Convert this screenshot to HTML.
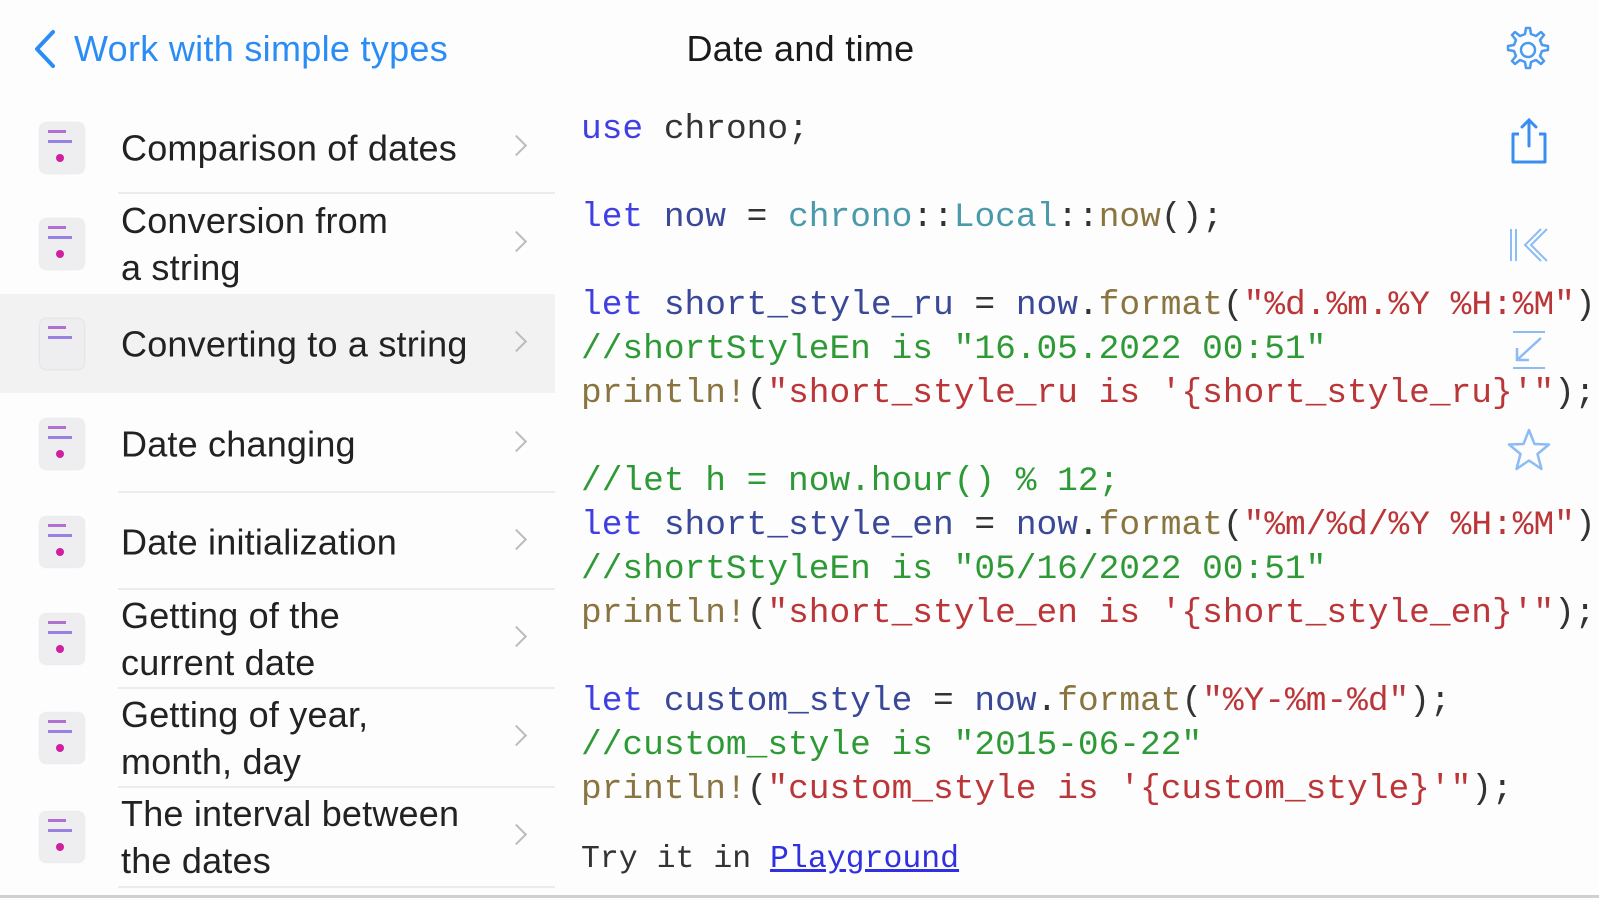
<!DOCTYPE html>
<html><head><meta charset="utf-8"><style>
body{margin:0;width:1599px;height:900px;background:#fdfdfd;position:relative;overflow:hidden;font-family:"Liberation Sans",sans-serif}
.back{position:absolute;left:74px;top:28px;font-size:36px;color:#2a8cf5;letter-spacing:0.3px}
.title{position:absolute;left:0;width:1601px;text-align:center;top:28px;font-size:36px;color:#1a1a1a;letter-spacing:0.3px}
.row{position:absolute;left:0;width:555px;height:96px}
.row.sel{background:#f2f2f2}
.row .t{position:absolute;left:121px;font-size:36px;color:#222;line-height:47px;top:50%;transform:translateY(-50%);letter-spacing:0.2px;white-space:nowrap}
.row .ic{position:absolute;left:40px;top:50%;margin-top:-25px;width:44px;height:50px;border-radius:6px;background:#eeeef0;box-shadow:0 0 2px #ccc}
.row .ic i{position:absolute;left:8px;height:3px;background:#b070d0}
.row .ic b{position:absolute;left:16px;top:31px;width:8px;height:8px;border-radius:50%;background:#d020a0}
.row .ch{position:absolute;left:509px;top:50%;margin-top:-10px;width:13px;height:13px;border-right:2px solid #bbb;border-top:2px solid #bbb;transform:rotate(45deg)}
.sep{position:absolute;left:118px;width:437px;height:2px;background:#ececec}
pre{position:absolute;left:581px;top:108px;margin:0;font-family:"Liberation Mono",monospace;font-size:34.5px;line-height:44px;color:#333}
.k{color:#3f3fe4}.v{color:#3a4898}.t2{color:#4a9aaa}.f{color:#8a7440}.s{color:#bb3638}.c{color:#2e9a36}
.try{position:absolute;left:581px;top:842px;font-family:"Liberation Mono",monospace;font-size:31.5px;color:#333}
.try a{color:#3030e0;text-decoration:underline}
.bot{position:absolute;left:0;top:895px;width:1599px;height:3px;background:#d0d0d0}
svg.i{position:absolute}
</style></head><body>
<svg class="i" style="left:29px;top:28px" width="30" height="42"><path d="M24 4 L8 21 L24 38" fill="none" stroke="#2a8cf5" stroke-width="4" stroke-linecap="round" stroke-linejoin="round"/></svg>
<div class="back">Work with simple types</div>
<div class="title">Date and time</div>

<div class="row" style="top:100px"><div class="ic"><i style="top:7px;width:18px"></i><i style="top:17px;width:24px;background:#9a80e0"></i><b></b></div><div class="t">Comparison of dates</div><div class="ch"></div></div>
<div class="sep" style="top:192px"></div>
<div class="row" style="top:196px"><div class="ic"><i style="top:7px;width:18px"></i><i style="top:17px;width:24px;background:#9a80e0"></i><b></b></div><div class="t">Conversion from<br>a string</div><div class="ch"></div></div>
<div class="row sel" style="top:294px;height:99px"><div class="ic"><i style="top:7px;width:18px"></i><i style="top:17px;width:24px;background:#9a80e0"></i></div><div class="t">Converting to a string</div><div class="ch"></div></div>
<div class="row" style="top:396px"><div class="ic"><i style="top:7px;width:18px"></i><i style="top:17px;width:24px;background:#9a80e0"></i><b></b></div><div class="t">Date changing</div><div class="ch"></div></div>
<div class="sep" style="top:491px"></div>
<div class="row" style="top:494px"><div class="ic"><i style="top:7px;width:18px"></i><i style="top:17px;width:24px;background:#9a80e0"></i><b></b></div><div class="t">Date initialization</div><div class="ch"></div></div>
<div class="sep" style="top:588px"></div>
<div class="row" style="top:591px"><div class="ic"><i style="top:7px;width:18px"></i><i style="top:17px;width:24px;background:#9a80e0"></i><b></b></div><div class="t">Getting of the<br>current date</div><div class="ch"></div></div>
<div class="sep" style="top:687px"></div>
<div class="row" style="top:690px"><div class="ic"><i style="top:7px;width:18px"></i><i style="top:17px;width:24px;background:#9a80e0"></i><b></b></div><div class="t">Getting of year,<br>month, day</div><div class="ch"></div></div>
<div class="sep" style="top:786px"></div>
<div class="row" style="top:789px"><div class="ic"><i style="top:7px;width:18px"></i><i style="top:17px;width:24px;background:#9a80e0"></i><b></b></div><div class="t">The interval between<br>the dates</div><div class="ch"></div></div>
<div class="sep" style="top:886px"></div>

<pre><span class="k">use</span> chrono;

<span class="k">let</span> <span class="v">now</span> = <span class="t2">chrono</span>::<span class="t2">Local</span>::<span class="f">now</span>();

<span class="k">let</span> <span class="v">short_style_ru</span> = <span class="v">now</span>.<span class="f">format</span>(<span class="s">"%d.%m.%Y %H:%M"</span>)
<span class="c">//shortStyleEn is "16.05.2022 00:51"</span>
<span class="f">println!</span>(<span class="s">"short_style_ru is '{short_style_ru}'"</span>);

<span class="c">//let h = now.hour() % 12;</span>
<span class="k">let</span> <span class="v">short_style_en</span> = <span class="v">now</span>.<span class="f">format</span>(<span class="s">"%m/%d/%Y %H:%M"</span>)
<span class="c">//shortStyleEn is "05/16/2022 00:51"</span>
<span class="f">println!</span>(<span class="s">"short_style_en is '{short_style_en}'"</span>);

<span class="k">let</span> <span class="v">custom_style</span> = <span class="v">now</span>.<span class="f">format</span>(<span class="s">"%Y-%m-%d"</span>);
<span class="c">//custom_style is "2015-06-22"</span>
<span class="f">println!</span>(<span class="s">"custom_style is '{custom_style}'"</span>);</pre>
<div class="try">Try it in <a>Playground</a></div>

<svg class="i" style="left:1500px;top:22px" width="56" height="56" viewBox="0 0 56 56"><path d="M28 6 l4 0 l1 6 l5 2 l5 -4 l3 3 l-4 5 l2 5 l6 1 l0 4 l-6 1 l-2 5 l4 5 l-3 3 l-5 -4 l-5 2 l-1 6 l-4 0 l-1 -6 l-5 -2 l-5 4 l-3 -3 l4 -5 l-2 -5 l-6 -1 l0 -4 l6 -1 l2 -5 l-4 -5 l3 -3 l5 4 l5 -2 z" fill="none" stroke="#4a9af0" stroke-width="2.5" stroke-linejoin="round" transform="translate(-2 0)"/><circle cx="28" cy="28" r="7" fill="none" stroke="#4a9af0" stroke-width="2.5"/></svg>
<svg class="i" style="left:1505px;top:114px" width="48" height="52"><path d="M14 20 H8 V48 H40 V20 H34" fill="none" stroke="#3a8ef0" stroke-width="3" stroke-linejoin="round"/><path d="M24 32 V6 M17 13 L24 6 L31 13" fill="none" stroke="#3a8ef0" stroke-width="3" stroke-linecap="round"/></svg>
<svg class="i" style="left:1505px;top:225px" width="48" height="40"><path d="M6 4 V36 M11 4 V36" stroke="#8cbcf5" stroke-width="2"/><path d="M42 4 L26 20 L42 36 M36 4 L20 20 L36 36" fill="none" stroke="#8cbcf5" stroke-width="2"/></svg>
<svg class="i" style="left:1505px;top:328px" width="48" height="44"><path d="M8 4 H40 M8 40 H40" stroke="#8cbcf5" stroke-width="2"/><path d="M36 10 L12 32 M12 20 V32 H24" fill="none" stroke="#8cbcf5" stroke-width="2.5"/></svg>
<svg class="i" style="left:1504px;top:426px" width="50" height="50"><path d="M25 4 L30.5 18 L45 18.5 L33.5 28 L37.5 43 L25 34.5 L12.5 43 L16.5 28 L5 18.5 L19.5 18 Z" fill="none" stroke="#8cbcf5" stroke-width="2.5" stroke-linejoin="round"/></svg>
<div class="bot"></div>
</body></html>
